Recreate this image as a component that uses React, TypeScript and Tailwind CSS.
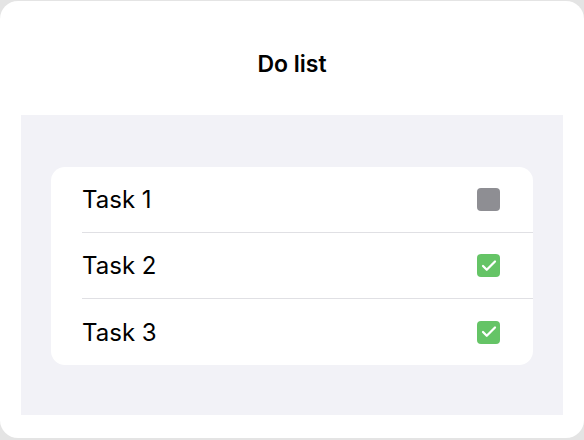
import { Check } from 'lucide-react';

const tasks = [
  { id: 1, title: 'Task 1', done: false },
  { id: 2, title: 'Task 2', done: true },
  { id: 3, title: 'Task 3', done: true },
];

function TaskCheck({ done }: { done: boolean }) {
  if (!done) return <span className="block h-[23px] w-[23px] rounded-[4px] bg-[#8e8e93]" />;
  return (
    <span className="flex h-[23px] w-[23px] items-center justify-center rounded-[4px] bg-[#65c466]">
      <Check className="h-[18px] w-[18px] text-white" strokeWidth={3} />
    </span>
  );
}

export default function App() {
  return (
    <div className="h-[440px] w-[584px] bg-[#e4e4e4] pt-px font-['Inter',sans-serif]">
      <div className="flex h-[437px] flex-col rounded-[18px] bg-white">
        {/* Header */}
        <header className="flex h-[114px] shrink-0 items-center justify-center pt-[12px]">
          <h1 className="text-[23px] font-semibold text-black">Do list</h1>
        </header>
        {/* List area */}
        <main className="mx-[21px] h-[300px] bg-[#f2f2f7] px-[30px] pt-[52px]">
          <ul className="rounded-[14px] bg-white">
            {tasks.map((task, i) => (
              <li key={task.id} className="pl-[31px]">
                <div
                  className={`flex h-[66px] items-center justify-between pr-[33px] ${
                    i < tasks.length - 1 ? 'border-b border-[#e0e0e4]' : ''
                  }`}
                >
                  <span className="pt-px text-[24px] text-black">{task.title}</span>
                  <TaskCheck done={task.done} />
                </div>
              </li>
            ))}
          </ul>
        </main>
      </div>
    </div>
  );
}
